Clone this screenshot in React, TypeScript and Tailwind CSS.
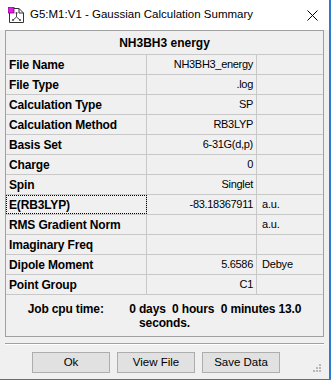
import React from "react";

const rows: { label: string; value: string; unit: string; focus?: boolean }[] = [
  { label: "File Name", value: "NH3BH3_energy", unit: "" },
  { label: "File Type", value: ".log", unit: "" },
  { label: "Calculation Type", value: "SP", unit: "" },
  { label: "Calculation Method", value: "RB3LYP", unit: "" },
  { label: "Basis Set", value: "6-31G(d,p)", unit: "" },
  { label: "Charge", value: "0", unit: "" },
  { label: "Spin", value: "Singlet", unit: "" },
  { label: "E(RB3LYP)", value: "-83.18367911", unit: "a.u.", focus: true },
  { label: "RMS Gradient Norm", value: "", unit: "a.u." },
  { label: "Imaginary Freq", value: "", unit: "" },
  { label: "Dipole Moment", value: "5.6586", unit: "Debye" },
  { label: "Point Group", value: "C1", unit: "" },
];

const sans = { fontFamily: '"Liberation Sans", Arial, sans-serif' };

function Btn({ children }: { children: React.ReactNode }) {
  return (
    <div className="w-[78px] h-[21px] border border-[#adadad] bg-[#e1e1e1] flex items-center justify-center text-[11.5px] text-black leading-none">
      {children}
    </div>
  );
}

export default function App() {
  return (
    <div
      className="relative w-[331px] h-[380px] flex flex-col border-r-2 border-b border-[#2b7bd0] bg-[#f0f0f0] overflow-hidden"
      style={sans}
    >
      {/* title bar */}
      <div className="h-[30px] shrink-0 bg-white flex items-center">
        <svg width="17" height="17" viewBox="0 0 17 17" className="ml-[8px] mt-[0px]">
          <path d="M1.5 1.5 H11 L15.5 6 V15.5 H1.5 Z" fill="#fff" stroke="#333" strokeWidth="1" />
          <path d="M11 1.5 V6 H15.5" fill="none" stroke="#333" strokeWidth="1" />
          <rect x="0" y="0" width="6" height="6" fill="#e020e0" stroke="#7a007a" strokeWidth="0.8" />
          <path d="M8.5 6 V10 M8.5 10 L5 13 M8.5 10 L12 13" stroke="#444" strokeWidth="1" fill="none" />
          <circle cx="8.5" cy="6" r="1" fill="#444" />
          <circle cx="5" cy="13" r="1" fill="#444" />
          <circle cx="12" cy="13" r="1" fill="#444" />
        </svg>
        <div className="ml-[5px] text-[11.5px] text-black whitespace-nowrap" style={sans}>
          G5:M1:V1 - Gaussian Calculation Summary
        </div>
        <svg width="11" height="11" viewBox="0 0 11 11" className="ml-auto mr-[11px]">
          <path d="M0.5 0.5 L10.5 10.5 M10.5 0.5 L0.5 10.5" stroke="#000" strokeWidth="1" />
        </svg>
      </div>

      {/* table */}
      <div className="ml-[5px] w-[319px] border border-[#a0a0a0] flex flex-col">
        <div className="h-[24px] border-b border-[#c8c8c8] flex items-center justify-center text-[12px] font-bold text-black">
          NH3BH3 energy
        </div>
        {rows.map((r) => (
          <div key={r.label} className="h-[20px] border-b border-[#c8c8c8] flex">
            <div
              className={
                "w-[141px] border-r border-[#c8c8c8] flex items-center pl-[3px] text-[12px] font-bold text-black tracking-[-0.15px] " +
                (r.focus ? "outline outline-1 outline-dotted outline-[#000] -outline-offset-1" : "")
              }
            >
              {r.label}
            </div>
            <div className="w-[110px] border-r border-[#c8c8c8] flex items-center justify-end pr-[3px] text-[11px] text-black tracking-[-0.3px]">
              {r.value}
            </div>
            <div className="flex-1 flex items-center pl-[5px] text-[11px] text-black tracking-[-0.2px]">
              {r.unit}
            </div>
          </div>
        ))}
        <div className="h-[41px] flex flex-col items-center justify-center text-[12px] font-bold text-black leading-[14px] tracking-[-0.15px]">
          <div className="whitespace-pre">{"Job cpu time:        0 days  0 hours  0 minutes 13.0"}</div>
          <div>seconds.</div>
        </div>
      </div>

      {/* separator */}
      <div className="ml-[5px] w-[319px] mt-[6px] h-[2px] border-t border-[#a0a0a0] border-b border-b-white" />

      {/* buttons */}
      <div className="mt-[7px] ml-[32px] flex gap-[7px]">
        <Btn>Ok</Btn>
        <Btn>View File</Btn>
        <Btn>Save Data</Btn>
      </div>

      {/* size grip */}
      <svg width="9" height="9" viewBox="0 0 9 9" className="absolute right-[7px] bottom-[6px]">
        {[
          [6, 0],
          [3, 3],
          [6, 3],
          [0, 6],
          [3, 6],
          [6, 6],
        ].map(([x, y]) => (
          <rect key={`${x}-${y}`} x={x} y={y} width="2" height="2" fill="#b8b8b8" />
        ))}
      </svg>
    </div>
  );
}
